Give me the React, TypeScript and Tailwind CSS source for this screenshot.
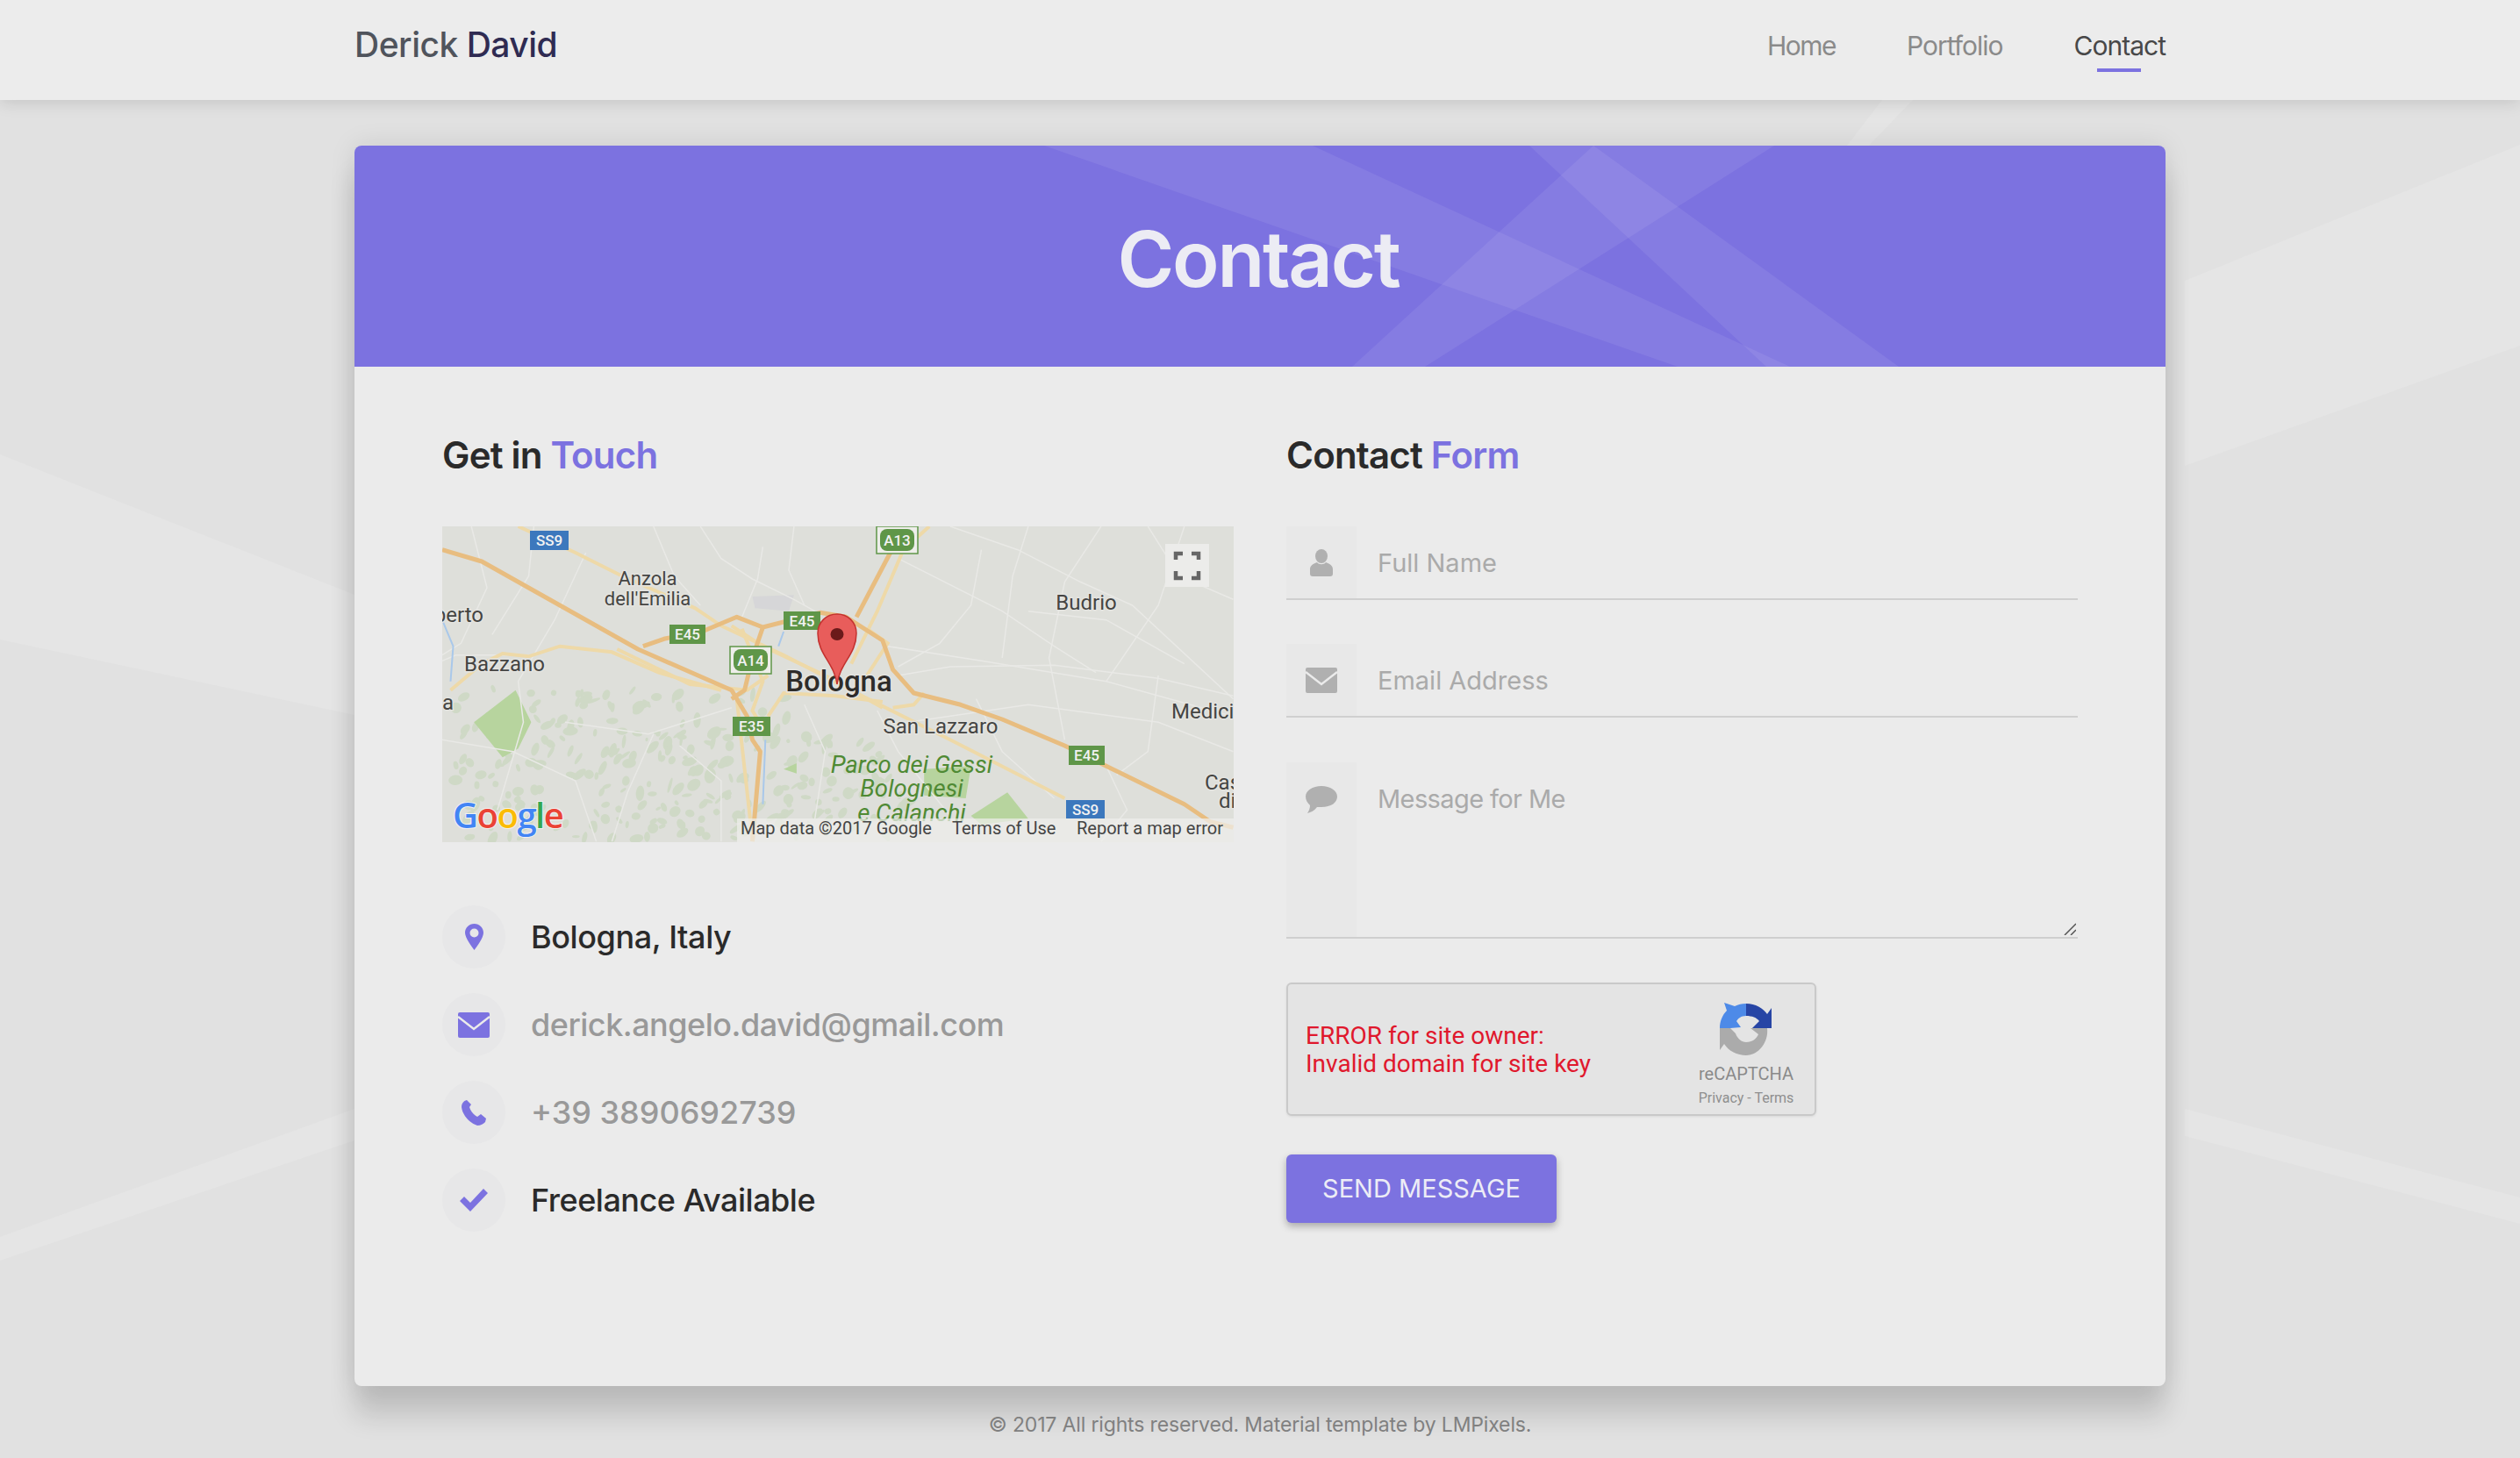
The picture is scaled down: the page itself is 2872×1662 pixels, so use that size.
// Map geometry was read off at 1.686 / 3 scale, so convert here
const toMap = (pts: number[][]) =>
  pts.map(([x, y]) => `${((x - 24) / 1.686).toFixed(1)},${((y - 30) / 3).toFixed(1)}`).join(" ");

const whiteRoads: number[][][] = [
  [[80, 30], [110, 240], [60, 430], [24, 470]],
  [[300, 120], [240, 350], [170, 560], [180, 700], [130, 1000]],
  [[520, 30], [560, 140], [620, 210], [700, 280], [740, 320]],
  [[640, 100], [630, 210], [600, 340]],
  [[1000, 30], [1130, 110], [1250, 220], [1350, 300], [1544, 620]],
  [[1060, 110], [1040, 300], [980, 430], [900, 510]],
  [[1290, 30], [1220, 220], [1190, 480], [1220, 760]],
  [[900, 540], [1000, 510], [1200, 505], [1400, 550], [1544, 610]],
  [[880, 440], [1060, 490], [1300, 560], [1544, 680]],
  [[900, 140], [1100, 320], [1200, 440], [1280, 530]],
  [[1400, 540], [1380, 800], [1320, 880]],
  [[1050, 620], [1100, 800], [1200, 960]],
  [[260, 700], [420, 740], [580, 650]],
  [[430, 740], [380, 940], [350, 1108]],
  [[720, 640], [760, 800], [740, 1030]],
  [[860, 660], [900, 800], [1000, 1020]],
  [[24, 490], [50, 470], [190, 470]],
  [[1380, 30], [1440, 200], [1544, 280]],
  [[430, 30], [470, 200], [520, 300]],
  [[200, 30], [190, 200], [120, 400]],
  [[700, 30], [690, 180], [720, 300]],
  [[1150, 30], [1120, 200], [1100, 480]],
  [[1450, 30], [1400, 300], [1300, 560]],
  [[920, 700], [1150, 640], [1400, 700], [1544, 800]],
  [[1300, 850], [1340, 1000], [1290, 1108]],
  [[24, 760], [160, 800], [280, 900], [320, 1108]],
  [[480, 780], [560, 900], [560, 1108]],
  [[1150, 320], [1300, 350], [1450, 500]],
];

const softRoads: number[][][] = [
  [[170, 30], [280, 120], [370, 200], [510, 310], [560, 370], [680, 470], [820, 600], [1000, 760], [1220, 960]],
  [[40, 590], [100, 500], [140, 465], [190, 475], [250, 440], [350, 460], [440, 530], [560, 590]],
  [[360, 450], [500, 570], [610, 590], [650, 540]],
  [[960, 30], [910, 110], [860, 320], [810, 500]],
  [[600, 380], [640, 560], [620, 660], [640, 720]],
  [[890, 650], [930, 640], [950, 600]],
  [[650, 680], [680, 600], [780, 610], [870, 630]],
  [[590, 620], [620, 1100]],
  [[580, 370], [640, 440], [760, 540], [870, 650]],
  [[840, 380], [880, 430], [840, 540]],
];

const orangeRoads: number[][][] = [
  [[24, 110], [100, 150], [400, 450], [580, 590], [610, 680], [620, 760], [635, 800], [620, 1108]],
  [[410, 440], [450, 415], [530, 385], [590, 340], [640, 375], [750, 325], [800, 340], [870, 420], [890, 520], [930, 600], [1020, 640], [1100, 690], [1220, 780], [1300, 850], [1450, 980], [1500, 1040], [1544, 1060]],
  [[885, 120], [820, 340]],
  [[640, 375], [620, 480], [605, 590], [580, 620]],
];

const greenPatches: number[][][] = [
  [[85, 700], [165, 590], [195, 700], [170, 790], [140, 820]],
  [[680, 860], [705, 840], [705, 875]],
  [[950, 860], [1040, 850], [1030, 960], [950, 950]],
  [[1040, 1020], [1110, 940], [1150, 1030], [1060, 1050]],
];

// Mottled hill woods south of the city
const speckle = (seed: number) => {
  const v = Math.sin(seed * 12.9898) * 43758.5453;
  return v - Math.floor(v);
};
const woodBlobs = Array.from({ length: 320 }, (_, i) => {
  const x = 15 + speckle(i + 1) * 520;
  const y = 185 + speckle(i + 400) * 172;
  return { x, y, rx: 1.5 + speckle(i + 800) * 5, ry: 2 + speckle(i + 1200) * 7, rot: speckle(i + 1600) * 90 };
}).filter((b) => b.x < 130 + (b.y - 185) * 1.6 + 260);

const Shield = ({ x, y, w, h, label, fill }: { x: number; y: number; w: number; h: number; label: string; fill: string }) => (
  <>
    <rect x={x} y={y} width={w} height={h} fill={fill} />
    <text x={x + w / 2} y={y + h / 2 + 6} textAnchor="middle" fontSize="17" fontWeight="500" fill="#f2f2f2">
      {label}
    </text>
  </>
);

const FramedShield = ({ x, y, label }: { x: number; y: number; label: string }) => (
  <>
    <rect x={x} y={y} width="47" height="31" fill="#eeeeea" stroke="#5f9648" strokeWidth="1.5" />
    <rect x={x + 4} y={y + 3} width="39" height="25" rx="8" fill="#5f9648" />
    <text x={x + 23.5} y={y + 22} textAnchor="middle" fontSize="17" fontWeight="500" fill="#f2f2f2">
      {label}
    </text>
  </>
);

const MapLabel = ({ x, y, text, size = 24, anchor = "middle" }: { x: number; y: number; text: string; size?: number; anchor?: "middle" | "start" | "end" }) => (
  <text x={x} y={y} textAnchor={anchor} fontSize={size} fill="#454543" stroke="#e4e4e0" strokeWidth="3" paintOrder="stroke">
    {text}
  </text>
);

const BolognaMap = () => (
  <svg viewBox="0 0 902 360" className="block w-full h-[360px] font-['Roboto',sans-serif]">
    <rect width="902" height="360" fill="#dedfda" />
    <g fill="#cfd9c6">
      {woodBlobs.map((b, i) => (
        <ellipse key={i} cx={b.x} cy={b.y} rx={b.rx} ry={b.ry} transform={`rotate(${b.rot} ${b.x} ${b.y})`} />
      ))}
    </g>
    {greenPatches.map((w, i) => (
      <polygon key={i} points={toMap(w)} fill="#b7d49e" />
    ))}
    <polygon points={toMap([[620, 270], [700, 265], [690, 320], [625, 310]])} fill="#d6d6d8" />
    {whiteRoads.map((r, i) => (
      <polyline key={i} points={toMap(r)} fill="none" stroke="#e9e9e6" strokeWidth="1.5" />
    ))}
    {softRoads.map((r, i) => (
      <polyline key={i} points={toMap(r)} fill="none" stroke="#eed9a8" strokeWidth="4" />
    ))}
    {orangeRoads.map((r, i) => (
      <polyline key={i} points={toMap(r)} fill="none" stroke="#e8bd80" strokeWidth="5" strokeLinejoin="round" />
    ))}
    <polyline points={toMap([[24, 350], [45, 440], [40, 560]])} fill="none" stroke="#a9c8ea" strokeWidth="2" />
    <polyline points={toMap([[680, 390], [670, 440]])} fill="none" stroke="#a9c8ea" strokeWidth="2" />
    <polyline points={toMap([[645, 760], [640, 980]])} fill="none" stroke="#a9c8ea" strokeWidth="2" />

    <MapLabel x={234} y={67} text="Anzola" size={22} />
    <MapLabel x={234} y={90} text="dell'Emilia" size={22} />
    <MapLabel x={734} y={95} text="Budrio" />
    <MapLabel x={47} y={109} text="berto" anchor="end" />
    <MapLabel x={71} y={165} text="Bazzano" />
    <MapLabel x={0} y={209} text="a" anchor="start" />
    <MapLabel x={568} y={236} text="San Lazzaro" />
    <MapLabel x={831} y={219} text="Medici" anchor="start" />
    <MapLabel x={869} y={300} text="Cas" anchor="start" />
    <MapLabel x={885} y={321} text="di" anchor="start" />
    <text x={452} y={188} textAnchor="middle" fontSize="33" fontWeight="500" fill="#2e2c2a" stroke="#e4e4e0" strokeWidth="3" paintOrder="stroke">
      Bologna
    </text>
    <g fontSize="27.5" fontStyle="italic" fill="#4f8a34" textAnchor="middle">
      <text x={535} y={281}>Parco dei Gessi</text>
      <text x={535} y={308}>Bolognesi</text>
      <text x={535} y={336}>e Calanchi</text>
    </g>

    <Shield x={100} y={5} w={44} h={22} label="SS9" fill="#3c78bd" />
    <Shield x={259} y={112} w={41} h={22} label="E45" fill="#5f9648" />
    <Shield x={389} y={97} w={42} h={21} label="E45" fill="#5f9648" />
    <Shield x={714} y={250} w={41} h={22} label="E45" fill="#5f9648" />
    <Shield x={331} y={217} w={43} h={22} label="E35" fill="#5f9648" />
    <Shield x={711} y={312} w={44} h={21} label="SS9" fill="#3c78bd" />
    <FramedShield x={495} y={0} label="A13" />
    <FramedShield x={328} y={137} label="A14" />

    {/* marker */}
    <path d="M450 180 C447 156 428 146 428 122 C428 109 438 100 450 100 C462 100 472 109 472 122 C472 146 453 156 450 180 Z" fill="#e85d5b" stroke="#c4322f" strokeWidth="1.5" />
    <ellipse cx="450" cy="123" rx="7.5" ry="7" fill="#6b1a1a" />

    {/* fullscreen control */}
    <rect x="824" y="20" width="50" height="49" fill="#ececea" />
    <path d="M836 38 V31 H844 M854 31 H862 V38 M836 51 V59 H844 M854 59 H862 V51" fill="none" stroke="#666" strokeWidth="4.5" />

    {/* attribution */}
    <rect x="336" y="333" width="566" height="27" fill="#efefec" opacity="0.72" />
    <g fontSize="20" fill="#444">
      <text x={340} y={351}>Map data ©2017 Google</text>
      <text x={581} y={351}>Terms of Use</text>
      <text x={723} y={351}>Report a map error</text>
    </g>
    <text x={12} y={344} fontSize="40" fontWeight="600" stroke="#f2f2f2" strokeWidth="2" paintOrder="stroke" className="font-['Open_Sans',sans-serif]" letterSpacing="-1.5">
      <tspan fill="#4285f4">G</tspan>
      <tspan fill="#ea4335">o</tspan>
      <tspan fill="#fbbc05">o</tspan>
      <tspan fill="#4285f4">g</tspan>
      <tspan fill="#34a853">l</tspan>
      <tspan fill="#ea4335">e</tspan>
    </text>
  </svg>
);

const PinIcon = () => (
  <svg viewBox="0 0 21 30" className="w-[21px] h-[30px]">
    <path fillRule="evenodd" d="M10.5 0C4.7 0 0 4.6 0 10.2 0 16 7.5 26 10.5 30 13.5 26 21 16 21 10.2 21 4.6 16.3 0 10.5 0Zm0 5.5a5 5 0 1 1 0 10 5 5 0 0 1 0-10Z" fill="#7c72e0" />
  </svg>
);

const MailIcon = ({ color }: { color: string }) => (
  <svg viewBox="0 0 36 29" className="w-[36px] h-[29px]">
    <rect width="36" height="29" rx="2" fill={color} />
    <path d="M0 5 L18 19 L36 5" fill="none" stroke="#ebebeb" strokeWidth="2.5" />
  </svg>
);

const PhoneIcon = () => (
  <svg viewBox="0 0 28 29" className="w-[28px] h-[29px]">
    <path d="M6 0 C2 1 0 4 0 8 C1 17 9 26 18 29 C22 29 25 27 27 25 L28 21 L22 16 L18 19 C14 17 10 12 9 8 L11 5 Z" fill="#7c72e0" />
  </svg>
);

const CheckIcon = () => (
  <svg viewBox="0 0 32 26" className="w-[32px] h-[26px]">
    <path d="M0 14 L5 9 L12 16 L27 0 L32 5 L12 26 Z" fill="#7c72e0" />
  </svg>
);

const UserIcon = () => (
  <svg viewBox="0 0 26 31" className="w-[26px] h-[31px]">
    <ellipse cx="13" cy="8" rx="7" ry="8" fill="#b0b0b0" />
    <path d="M8 15 C3 17 0 19 0 23 V28 C0 30 1 31 3 31 H23 C25 31 26 30 26 28 V23 C26 19 23 17 18 15 C16 18 10 18 8 15 Z" fill="#b0b0b0" />
  </svg>
);

const BubbleIcon = () => (
  <svg viewBox="0 0 36 31" className="w-[36px] h-[31px]">
    <path d="M18 0 C28 0 36 5 36 12 C36 19 29 24 18 24 L13 24 C10 28 6 30 2 31 C4 28 5 25 5 22 C2 19 0 16 0 12 C0 5 8 0 18 0 Z" fill="#b0b0b0" />
  </svg>
);

const RecaptchaLogo = () => (
  <svg viewBox="0 0 60 60" className="w-[60px] h-[60px]">
    <path d="M0 29 C0 21 3 14 8 9 L5 0 L17 4 C21 2 25 1 30 1 L30 15 C24 15 21 18 19 21 L24 28 L12 29 Z" fill="#4d8ae8" />
    <path d="M30 1 C41 1 49 6 54 13 L59 6 V29 H37 L45 21 C42 17 37 15 30 15 Z" fill="#2745a5" />
    <path d="M0 29 H12 L18 35 C20 41 25 45 30 45 C37 45 42 41 44 36 L35 29 H54 C56 45 44 60 30 60 C20 60 10 55 5 47 L0 54 Z" fill="#ababab" />
  </svg>
);

const contactItems = [
  { icon: <PinIcon />, text: "Bologna, Italy", className: "text-[#2a2a2a] tracking-[-0.4px]" },
  { icon: <MailIcon color="#7c72e0" />, text: "derick.angelo.david@gmail.com", className: "text-[#999999] tracking-[-0.5px]" },
  { icon: <PhoneIcon />, text: "+39 3890692739", className: "text-[#999999]" },
  { icon: <CheckIcon />, text: "Freelance Available", className: "text-[#2a2a2a] tracking-[-0.5px]" },
];

const fieldClass =
  "flex-1 min-w-0 bg-transparent pl-6 text-[29px] text-[#555] placeholder:text-[#aaaaaa] outline-none font-['Inter',sans-serif]";

export default function App() {
  return (
    <div className="relative h-[1662px] overflow-hidden bg-[#e1e1e1] font-['Inter',sans-serif]">
      {/* Page background rays */}
      <svg viewBox="0 0 2872 1662" className="absolute inset-0 w-full h-full">
        <g fill="#e5e5e5">
          <polygon points="0,518 404,678 404,815 0,729" />
          <polygon points="2490,320 2872,165 2872,394 2490,531" />
          <polygon points="0,1410 404,1264 404,1300 0,1437" />
          <polygon points="2490,1264 2872,1365 2872,1395 2490,1295" />
          <polygon points="2105,166 2145,114 2180,114 2130,166" />
        </g>
      </svg>

      {/* Top bar */}
      <header className="relative z-10 h-[114px] bg-[#ececec] shadow-[0_2px_18px_rgba(0,0,0,0.14)]">
        <div className="mx-[404px] flex items-start justify-between">
          <a className="pt-[25px] text-[39px] leading-[52px] font-medium tracking-[-0.5px] text-[#50545c] whitespace-nowrap">
            Derick <span className="text-[#2f2b52]">David</span>
          </a>
          <nav className="flex gap-[81px] pt-[32px] text-[30px] leading-[40px] tracking-[-1px] text-[#8a8a8a]">
            <a className="tracking-[-1.5px]">Home</a>
            <a>Portfolio</a>
            <a className="relative text-[#484848]">
              Contact
              <span className="absolute left-[26px] top-[46px] h-[4px] w-[50px] bg-[#7c72e0]" />
            </a>
          </nav>
        </div>
      </header>

      {/* Card */}
      <main className="relative mx-[404px] mt-[52px] h-[1414px] rounded-lg bg-[#ebebeb] shadow-[0_34px_30px_rgba(0,0,0,0.14),0_0_30px_rgba(0,0,0,0.1)]">
        <div className="relative flex h-[252px] items-center justify-center overflow-hidden rounded-t-lg bg-[#7c72e0]">
          <svg viewBox="0 0 2064 252" className="absolute inset-0 w-full h-full">
            <g fill="#ffffff" fillOpacity="0.075">
              <polygon points="786,0 1092,0 1636,252 1508,252" />
              <polygon points="1339,0 1412,0 1760,252 1609,252" />
              <polygon points="1412,0 1618,0 1220,252 1137,252" />
            </g>
          </svg>
          <h1 className="relative -left-[2px] translate-y-[3px] text-[88px] leading-[100px] font-semibold tracking-[-2.2px] text-[#ececf4]">Contact</h1>
        </div>

        <div className="grid grid-cols-2 gap-[60px] px-[100px] pt-[75px]">
          {/* Left column */}
          <section>
            <h2 className="text-[42px] leading-[52px] font-semibold tracking-[-0.8px] text-[#2a2a2a]">
              Get in <span className="text-[#7c72e0]">Touch</span>
            </h2>
            <div className="mt-[55px]">
              <BolognaMap />
            </div>
            <ul className="mt-[72px] flex flex-col gap-[28px]">
              {contactItems.map((item) => (
                <li key={item.text} className="flex items-center gap-[29px]">
                  <span className="flex h-[72px] w-[72px] items-center justify-center rounded-full bg-[#e7e7e8]">{item.icon}</span>
                  <span className={`text-[36px] font-medium ${item.className}`}>{item.text}</span>
                </li>
              ))}
            </ul>
          </section>

          {/* Right column */}
          <section>
            <h2 className="text-[42px] leading-[52px] font-semibold tracking-[-0.8px] text-[#2a2a2a]">
              Contact <span className="text-[#7c72e0]">Form</span>
            </h2>
            <form className="mt-[55px] flex flex-col">
              <div className="flex h-[84px] border-b-2 border-[#cfcfcf]">
                <span className="flex w-[80px] items-center justify-center bg-[#e8e8e8]">
                  <UserIcon />
                </span>
                <input placeholder="Full Name" className={`${fieldClass} pt-[2px]`} />
              </div>
              <div className="mt-[50px] flex h-[84px] border-b-2 border-[#cfcfcf]">
                <span className="flex w-[80px] items-center justify-center bg-[#e8e8e8]">
                  <MailIcon color="#b0b0b0" />
                </span>
                <input placeholder="Email Address" className={`${fieldClass} pt-[2px]`} />
              </div>
              <div className="relative mt-[51px] flex h-[201px] border-b-2 border-[#cfcfcf]">
                <span className="flex w-[80px] justify-center bg-[#e8e8e8] pt-[27px]">
                  <BubbleIcon />
                </span>
                <textarea placeholder="Message for Me" className={`${fieldClass} resize-none pt-[20px] leading-[44px] tracking-[-0.6px]`} />
                <svg viewBox="0 0 14 14" className="absolute bottom-[2px] right-[2px] h-[14px] w-[14px]">
                  <path d="M1 14 L14 1 M8 14 L14 8" stroke="#555" strokeWidth="1.5" />
                </svg>
              </div>

              <div className="mt-[50px] flex h-[152px] w-[604px] items-stretch justify-between rounded-md border-2 border-[#c9c9c9] bg-[#e4e4e4] pl-[20px] pr-[23px] font-['Roboto',sans-serif] shadow-[0_1px_3px_rgba(0,0,0,0.08)]">
                <p className="self-center pt-[2px] text-[28px] leading-[32px] text-[#e0182d]">
                  ERROR for site owner:
                  <br />
                  Invalid domain for site key
                </p>
                <div className="flex w-[110px] flex-col items-center pt-[21px]">
                  <RecaptchaLogo />
                  <span className="mt-[8px] text-[20px] leading-[26px] text-[#8a8a8a]">reCAPTCHA</span>
                  <span className="mt-[4px] whitespace-nowrap text-[16px] leading-[22px] text-[#8f8f8f]">Privacy - Terms</span>
                </div>
              </div>

              <button type="button" className="mt-[44px] h-[78px] w-[308px] rounded-md bg-[#7c72e0] text-[29px] text-[#ececf6] shadow-[0_4px_8px_rgba(0,0,0,0.28)]">
                SEND MESSAGE
              </button>
            </form>
          </section>
        </div>
      </main>

      <footer className="relative pt-[32px] text-center text-[23px] leading-[24px] tracking-[-0.15px] text-[#808080]">
        © 2017 All rights reserved. Material template by LMPixels.
      </footer>
    </div>
  );
}
